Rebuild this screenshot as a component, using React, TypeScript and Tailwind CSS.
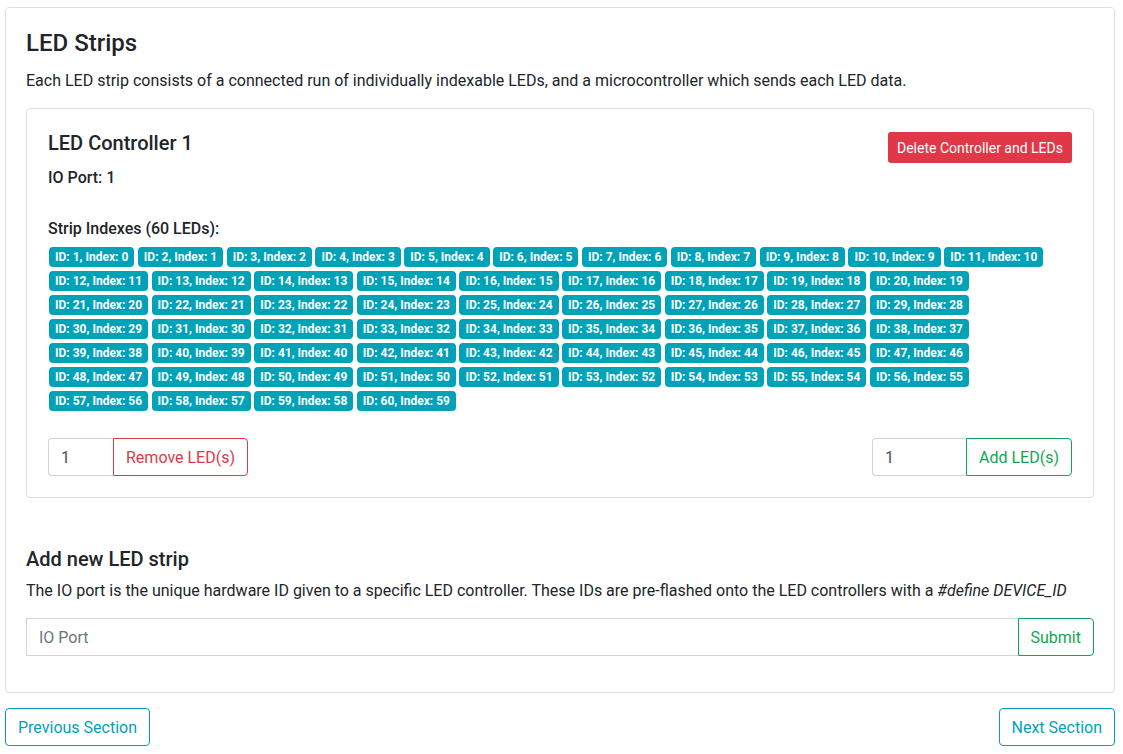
import React from "react";

const leds = Array.from({ length: 60 }, (_, i) => ({ id: i + 1, index: i }));

const fieldClass =
  "h-[38px] min-w-0 border border-r-0 border-[#ced4da] bg-white px-3 text-[#495057] placeholder-[#6c757d] outline-none focus:border-[#17a2b8]";

const buttonClass = "border px-3 pt-[7px] pb-[5px]";

const keepPage = (event: React.FormEvent) => event.preventDefault();

export default function App() {
  return (
    <main className="pt-[7px] pr-2 pb-2 pl-[5px] font-[Roboto,sans-serif] text-base leading-6 text-[#212529]">
      <section className="rounded border border-[#dfdfdf] px-5 pt-[21px] pb-9">
        <h2 className="mb-3 text-2xl leading-7 font-medium">LED Strips</h2>
        <p className="mb-[15px]">
          Each LED strip consists of a connected run of individually indexable LEDs, and a microcontroller which sends
          each LED data.
        </p>

        <article className="mb-[49px] rounded border border-[#dfdfdf] p-[21px]">
          <div className="flex items-start justify-between">
            <div>
              <h3 className="mb-2.5 text-xl leading-[26px] font-medium">LED Controller 1</h3>
              <p className="font-medium">IO Port: 1</p>
            </div>
            <button
              type="button"
              className="mt-0.5 rounded-[3px] bg-[#e03847] px-[9px] pt-1.5 pb-1 text-sm leading-[21px] text-white"
            >
              Delete Controller and LEDs
            </button>
          </div>

          <h4 className="mt-[27px] mb-[3px] font-medium">Strip Indexes (60 LEDs):</h4>
          <ul className="pr-1 pl-px text-sm leading-6">
            {leds.map((led) => (
              <React.Fragment key={led.id}>
                <li className="inline-block rounded bg-[#00a2b8] px-1.5 align-middle text-xs leading-5 font-bold text-white">
                  ID: {led.id}, Index: {led.index}
                </li>{" "}
              </React.Fragment>
            ))}
          </ul>

          <div className="mt-[26px] flex justify-between">
            <form className="flex" onSubmit={keepPage}>
              <input
                aria-label="Number of LEDs to remove"
                defaultValue="1"
                className={`${fieldClass} w-[65px] rounded-l`}
              />
              <button type="submit" className={`${buttonClass} rounded-r border-[#e03847] text-[#e03847]`}>
                Remove LED(s)
              </button>
            </form>
            <form className="flex" onSubmit={keepPage}>
              <input
                aria-label="Number of LEDs to add"
                defaultValue="1"
                className={`${fieldClass} w-[94px] rounded-l`}
              />
              <button type="submit" className={`${buttonClass} rounded-r border-[#0fa750] text-[#0fa750]`}>
                Add LED(s)
              </button>
            </form>
          </div>
        </article>

        <h3 className="mb-2 text-xl leading-6 font-medium">Add new LED strip</h3>
        <p className="mb-[15px]">
          The IO port is the unique hardware ID given to a specific LED controller. These IDs are pre-flashed onto the
          LED controllers with a <em>#define DEVICE_ID</em>
        </p>
        <form className="flex" onSubmit={keepPage}>
          <input aria-label="IO Port" placeholder="IO Port" className={`${fieldClass} flex-1`} />
          <button type="submit" className={`${buttonClass} rounded-r border-[#0fa750] text-[#0fa750]`}>
            Submit
          </button>
        </form>
      </section>

      <nav aria-label="Sections" className="mt-[15px] flex justify-between">
        <button type="button" className={`${buttonClass} rounded border-[#00a2b8] text-[#00a2b8]`}>
          Previous Section
        </button>
        <button type="button" className={`${buttonClass} rounded border-[#00a2b8] text-[#00a2b8]`}>
          Next Section
        </button>
      </nav>
    </main>
  );
}
